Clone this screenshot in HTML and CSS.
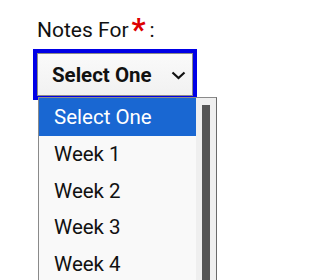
FILE: index.html
```html
<!DOCTYPE html>
<html>
<head>
<meta charset="utf-8">
<link rel="stylesheet" href="styles.css">
</head>
<body>
<div class="field">
  <label class="label">Notes For<span class="req">*</span>:</label>
  <div class="select-wrap">
    <div class="select">
      <span class="select-text">Select One</span>
      <svg class="chev" width="15" height="9" viewBox="0 0 15 9"><polyline points="1.5,1.5 7.5,7 13.5,1.5" fill="none" stroke="#111" stroke-width="2.2"/></svg>
    </div>
  </div>
  <div class="dropdown">
    <ul class="options">
      <li class="opt active">Select One</li>
      <li class="opt">Week 1</li>
      <li class="opt">Week 2</li>
      <li class="opt">Week 3</li>
      <li class="opt">Week 4</li>
    </ul>
    <div class="scroll"><div class="thumb"></div></div>
  </div>
</div>
</body>
</html>
```
FILE: styles.css
```css
html, body {
  margin: 0;
  padding: 0;
  background: #ffffff;
  width: 217px;
  height: 280px;
  overflow: hidden;
}
body {
  font-family: Roboto, "Liberation Sans", sans-serif;
  color: #111;
}
.field {
  position: relative;
  padding: 17px 0 0 33px;
}
.label {
  display: block;
  font-size: 21px;
  line-height: 26px;
  padding-left: 4px;
  height: 28px;
  margin-bottom: 4px;
  white-space: nowrap;
}
.req {
  color: #dd0000;
  font-weight: bold;
  font-size: 31px;
  margin: 0 4px 0 3px;
  vertical-align: -3px;
  line-height: 10px;
}
.select-wrap {
  width: 156px;
  border: 4px solid #0000e6;
}
.select {
  height: 41px;
  border: 1px solid #8a8a8a;
  background: linear-gradient(#fafafa, #f1f1f1);
  display: flex;
  align-items: center;
  justify-content: space-between;
  padding: 0 6px 0 14px;
}
.select-text {
  font-weight: bold;
  font-size: 20.5px;
}
.chev {
  display: block;
  margin-top: 1px;
}
.dropdown {
  position: absolute;
  left: 38px;
  top: 97px;
  width: 177px;
  height: 190px;
  border: 1px solid #8a8a8a;
  border-right: 1px solid #6a6a6a;
  background: #f9f9f9;
  display: flex;
}
.options {
  list-style: none;
  margin: 0;
  padding: 0;
  flex: 1;
}
.opt {
  height: 36.5px;
  line-height: 36px;
  padding-left: 15px;
  font-size: 20.5px;
  color: #111;
}
.opt.active {
  background: #1967d2;
  color: #fff;
  height: 38px;
  line-height: 38px;
}
.scroll {
  width: 20px;
  background: #efefef;
  padding: 7px 6px 0 6px;
  box-sizing: border-box;
}
.thumb {
  width: 8px;
  height: 300px;
  background: #555;
}
```
